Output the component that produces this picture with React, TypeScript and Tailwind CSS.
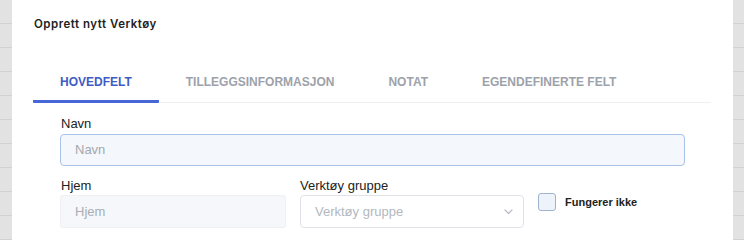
import React from 'react';

const rows = Array.from({ length: 10 });

function Strip({ className }: { className: string }) {
  return (
    <div className={`bg-[#e2e2e2] shrink-0 ${className}`}>
      {rows.map((_, i) => (
        <div key={i} className="h-[24px] border-b border-[#d2d2d2]" />
      ))}
    </div>
  );
}

const tabs = ['HOVEDFELT', 'TILLEGGSINFORMASJON', 'NOTAT', 'EGENDEFINERTE FELT'];

export default function App() {
  return (
    <div className="flex h-[240px] w-[744px] overflow-hidden bg-white font-['Liberation_Sans',Arial,sans-serif]">
      <Strip className="w-[12px]" />

      <div className="flex-1 bg-white">
        {/* Title */}
        <div className="pl-[22px] pt-[16px] font-['Inter',sans-serif] text-[11.5px] font-semibold leading-[16px] tracking-[0.5px] text-[#222]">
          Opprett nytt Verktøy
        </div>

        {/* Tabs */}
        <div className="ml-[21px] mr-[22px] mt-[31px] flex border-b border-[#eeeff1]">
          {tabs.map((tab, i) => (
            <div
              key={tab}
              className={`-mb-px flex h-[40px] items-center border-b-[3px] px-[27px] text-[12px] font-bold leading-[16px] ${
                i === 0 ? 'rounded-b-[1px] border-[#4767d6] text-[#3e5cc4]' : 'border-transparent text-[#9da2aa]'
              }`}
            >
              {tab}
            </div>
          ))}
        </div>

        {/* Form */}
        <div className="ml-[48px] w-[625px]">
          <label className="mt-[13px] block pl-px text-[13px] leading-[16px] text-[#222]">Navn</label>
          <div className="mt-[2px] flex h-[32px] items-center rounded-[4px] border border-[#a9c2e7] bg-[#f4f7fc] px-[14px] text-[13px] text-[#a3a8ae]">
            Navn
          </div>

          <div className="mt-[12px] flex">
            <div className="w-[226px]">
              <label className="block pl-px text-[13px] leading-[16px] text-[#222]">Hjem</label>
              <div className="mt-[1px] flex h-[33px] items-center rounded-[3px] border border-[#eef0f3] bg-[#f5f7fa] px-[14px] text-[13px] text-[#a9aeb4]">
                Hjem
              </div>
            </div>
            <div className="ml-[14px] w-[224px]">
              <label className="block text-[13px] leading-[16px] text-[#222]">Verktøy gruppe</label>
              <div className="mt-[1px] flex h-[33px] items-center justify-between rounded-[4px] border border-[#dfe3e8] bg-white pl-[14px] pr-[10px] text-[13px] text-[#b3b8be]">
                <span>Verktøy gruppe</span>
                <svg width="9" height="6" viewBox="0 0 9 6" fill="none">
                  <path d="M1 1l3.5 3.5L8 1" stroke="#b8bdc4" strokeWidth="1.2" strokeLinecap="round" strokeLinejoin="round" />
                </svg>
              </div>
            </div>
            <div className="ml-[14px] mt-[15px] flex h-[18px] items-center">
              <div className="h-[18px] w-[18px] rounded-[3px] border border-[#9fb3cf] bg-[#eef3fb]" />
              <span className="ml-[9px] text-[11px] font-bold text-[#222]">Fungerer ikke</span>
            </div>
          </div>
        </div>
      </div>

      <Strip className="w-[11px]" />
    </div>
  );
}
